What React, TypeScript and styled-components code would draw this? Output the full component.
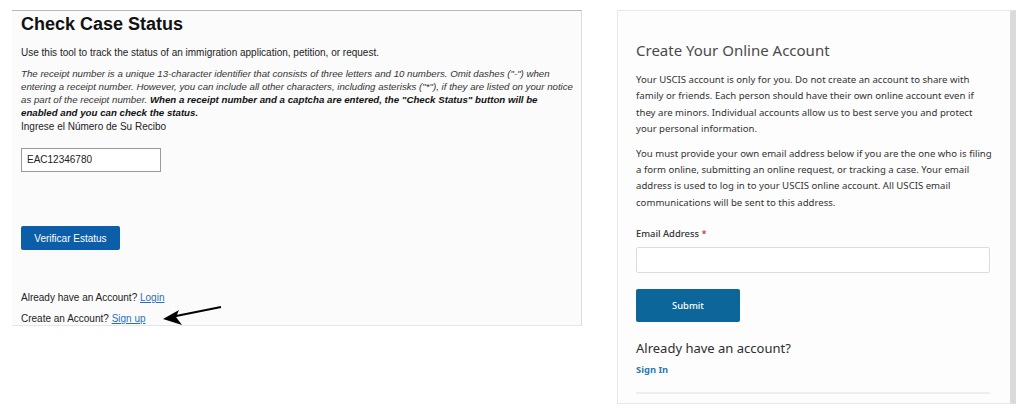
import React, { FunctionComponent } from "react";
import styled, { createGlobalStyle } from "styled-components";

const GlobalStyle = createGlobalStyle`
  html, body {
    margin: 0;
    padding: 0;
    background: #ffffff;
  }
`;

const Page = styled.div`
  display: flex;
  flex-direction: row;
  align-items: flex-start;
  width: 1024px;
  height: 410px;
  padding: 10px 0 0 12px;
  box-sizing: border-box;
  gap: 35px;
`;

const CaseStatusPanel = styled.div`
  position: relative;
  width: 570px;
  height: 316px;
  box-sizing: border-box;
  padding: 2px 0 0 9px;
  background: #fbfbfb;
  border-top: 1px solid #b8b8b8;
  border-right: 1px solid #dedede;
  border-bottom: 1px solid #e6e6e6;
  font-family: "Liberation Sans", Arial, sans-serif;
  color: #222;
  font-size: 10px;
`;

const CaseHeading = styled.h1`
  margin: 0;
  font-size: 18px;
  line-height: 22px;
  font-weight: 700;
  color: #111;
`;

const CaseText = styled.p<{ $gap: number }>`
  margin: ${(p) => p.$gap}px 0 0;
  line-height: 13px;
`;

const ReceiptNote = styled.p`
  margin: 8px 0 0;
  font-size: 9.7px;
  font-style: italic;
  line-height: 13px;
  width: 554px;
  color: #333;
  b {
    color: #111;
  }
`;

const ReceiptInput = styled.div`
  margin-top: 15px;
  width: 140px;
  height: 24px;
  box-sizing: border-box;
  border: 1px solid #9a9a9a;
  background: #fff;
  padding: 0 5px;
  line-height: 22px;
  color: #222;
  font-size: 10px;
`;

const VerifyButton = styled.button`
  display: block;
  margin-top: 54px;
  width: 99px;
  height: 24px;
  border: none;
  border-radius: 2px;
  background: #0c5ea9;
  color: #fff;
  font-family: "Liberation Sans", Arial, sans-serif;
  font-size: 10px;
  padding: 0;
`;

const AccountLine = styled.div<{ $first?: boolean }>`
  margin-top: ${(p) => (p.$first ? "41px" : "8px")};
  line-height: 13px;
`;

const CaseLink = styled.a`
  color: #2a6fba;
  text-decoration: underline;
`;

const Arrow = styled.svg`
  position: absolute;
  left: 139px;
  top: 282px;
`;

const AccountPanel = styled.div`
  width: 399px;
  height: 394px;
  box-sizing: border-box;
  padding: 29px 0 0 18px;
  background: #fdfdfd;
  border: 1px solid #e8e8e8;
  border-right: 6px solid #dadada;
  font-family: "Noto Sans", "Open Sans", sans-serif;
  color: #333;
`;

const AccountTitle = styled.h2`
  margin: 0;
  font-size: 15px;
  line-height: 20px;
  font-weight: 400;
  color: #4a4a4a;
`;

const AccountText = styled.p<{ $gap: number }>`
  margin: ${(p) => p.$gap}px 0 0;
  width: 357px;
  font-size: 9.6px;
  line-height: 16.4px;
  color: #333;
`;

const FieldLabel = styled.label`
  display: block;
  margin-top: 16px;
  font-size: 9.4px;
  line-height: 14px;
  font-weight: 500;
  color: #333;
  span {
    color: #c0392b;
  }
`;

const EmailInput = styled.div`
  margin-top: 6px;
  width: 354px;
  height: 26px;
  box-sizing: border-box;
  border: 1px solid #dcdcdc;
  border-radius: 2px;
  background: #fff;
`;

const SubmitButton = styled.button`
  display: block;
  margin-top: 16px;
  width: 104px;
  height: 33px;
  border: none;
  border-radius: 2px;
  background: #0d6699;
  color: #fff;
  font-family: "Noto Sans", "Open Sans", sans-serif;
  font-size: 9.4px;
  font-weight: 500;
  padding: 0;
`;

const AlreadyHeading = styled.h3`
  margin: 17px 0 0;
  font-size: 13px;
  line-height: 18px;
  font-weight: 400;
  color: #2e2e2e;
`;

const SignInLink = styled.a`
  display: block;
  margin-top: 6px;
  font-size: 9.4px;
  line-height: 14px;
  font-weight: 700;
  color: #2b7ab3;
  text-decoration: none;
`;

const Divider = styled.hr`
  margin: 15px 0 0;
  width: 354px;
  border: none;
  border-top: 2px solid #eeeeee;
`;

const CaseStatus: FunctionComponent = () => (
  <CaseStatusPanel>
    <CaseHeading>Check Case Status</CaseHeading>
    <CaseText $gap={11}>
      Use this tool to track the status of an immigration application,
      petition, or request.
    </CaseText>
    <ReceiptNote>
      The receipt number is a unique 13-character identifier that consists of
      three letters and 10 numbers. Omit dashes ("-") when entering a receipt
      number. However, you can include all other characters, including
      asterisks ("*"), if they are listed on your notice as part of the receipt
      number.{" "}
      <b>
        When a receipt number and a captcha are entered, the "Check Status"
        button will be enabled and you can check the status.
      </b>
    </ReceiptNote>
    <CaseText $gap={1}>Ingrese el Número de Su Recibo</CaseText>
    <ReceiptInput>EAC12346780</ReceiptInput>
    <VerifyButton>Verificar Estatus</VerifyButton>
    <AccountLine $first>
      Already have an Account? <CaseLink href="#">Login</CaseLink>
    </AccountLine>
    <AccountLine>
      Create an Account? <CaseLink href="#">Sign up</CaseLink>
    </AccountLine>
    <Arrow width="80" height="40" viewBox="0 0 80 40">
      <line x1="70" y1="14" x2="20" y2="24" stroke="#000" strokeWidth="2.2" />
      <polygon points="12,26 28,17 25,24 31,32" fill="#000" />
    </Arrow>
  </CaseStatusPanel>
);

const OnlineAccount: FunctionComponent = () => (
  <AccountPanel>
    <AccountTitle>Create Your Online Account</AccountTitle>
    <AccountText $gap={12}>
      Your USCIS account is only for you. Do not create an account to share
      with family or friends. Each person should have their own online account
      even if they are minors. Individual accounts allow us to best serve you
      and protect your personal information.
    </AccountText>
    <AccountText $gap={8}>
      You must provide your own email address below if you are the one who is
      filing a form online, submitting an online request, or tracking a case.
      Your email address is used to log in to your USCIS online account. All
      USCIS email communications will be sent to this address.
    </AccountText>
    <FieldLabel>
      Email Address <span>*</span>
    </FieldLabel>
    <EmailInput />
    <SubmitButton>Submit</SubmitButton>
    <AlreadyHeading>Already have an account?</AlreadyHeading>
    <SignInLink href="#">Sign In</SignInLink>
    <Divider />
  </AccountPanel>
);

const App: FunctionComponent = () => (
  <>
    <GlobalStyle />
    <Page>
      <CaseStatus />
      <OnlineAccount />
    </Page>
  </>
);

export default App;
